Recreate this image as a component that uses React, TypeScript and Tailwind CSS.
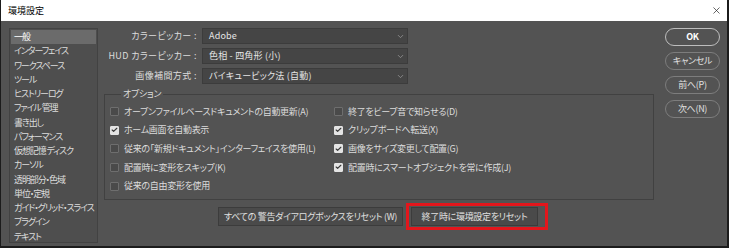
import { Check, ChevronDown, X } from "lucide-react";

const jp = {
  fontFamily: '"Noto Sans CJK JP", "Noto Sans", sans-serif',
  fontFeatureSettings: '"palt"',
};

const sideItems = [
  "一般",
  "インターフェイス",
  "ワークスペース",
  "ツール",
  "ヒストリーログ",
  "ファイル 管理",
  "書き出し",
  "パフォーマンス",
  "仮想記憶 ディスク",
  "カーソル",
  "透明部分・色域",
  "単位・定規",
  "ガイド・グリッド・スライス",
  "プラグイン",
  "テキスト",
];

const selects = [
  { label: "カラーピッカー", value: "Adobe" },
  { label: "HUD カラーピッカー", value: "色相 - 四角形 (小)" },
  { label: "画像補間方式", value: "バイキュービック法 (自動)" },
];

const leftOptions = [
  { text: "オープンファイルベースドキュメントの自動更新(A)", on: false },
  { text: "ホーム画面を自動表示", on: true },
  { text: "従来の「新規ドキュメント」インターフェイスを使用(L)", on: false },
  { text: "配置時に変形をスキップ(K)", on: false },
  { text: "従来の自由変形を使用", on: false },
];

const rightOptions = [
  { text: "終了をビープ音で知らせる(D)", on: false },
  { text: "クリップボードへ転送(X)", on: true },
  { text: "画像をサイズ変更して配置(G)", on: true },
  { text: "配置時にスマートオブジェクトを常に作成(J)", on: true },
];

const CheckRow = ({ text, on }: { text: string; on: boolean }) => (
  <div className="flex h-[18.7px] items-center gap-[5px]">
    <span
      className={`flex h-[9px] w-[9px] shrink-0 items-center justify-center rounded-[1px] border ${
        on ? "border-[#e4e4e4] bg-[#e4e4e4]" : "border-[#6e6e6e] bg-[#4a4a4a]"
      }`}
    >
      {on && <Check size={8} strokeWidth={4} color="#3a3a3a" />}
    </span>
    <span className="whitespace-nowrap">{text}</span>
  </div>
);

const PillButton = ({ label, strong }: { label: string; strong?: boolean }) => (
  <button
    className={`flex h-[18px] w-[55px] items-center justify-center rounded-full border text-[9px] ${
      strong
        ? "border-[#bdbdbd] font-semibold text-white"
        : "border-[#7d7d7d] text-[#e0e0e0]"
    }`}
  >
    {label}
  </button>
);

export default function App() {
  return (
    <div
      className="flex h-[248px] w-[729px] flex-col overflow-hidden border-l border-r-2 border-b-2 border-[#1c1c1c] bg-[#535353] text-[9px] tracking-[-0.3px] text-[#dcdcdc]"
      style={jp}
    >
      <div className="flex h-[21px] shrink-0 items-center justify-between bg-white pl-[7px] pr-[5px] text-[9px] tracking-normal text-black">
        <span>環境設定</span>
        <X size={11} strokeWidth={1.5} color="#222" />
      </div>

      <div className="flex flex-1 pt-[7px]">
        {/* sidebar */}
        <div className="ml-[8px] h-[215px] w-[89px] shrink-0 border border-[#424242] bg-[#4e4e4e] p-[1px] text-[9px] tracking-[-1.1px]">
          {sideItems.map((item, i) => (
            <div
              key={item}
              className={`h-[14.28px] whitespace-nowrap pl-[3px] leading-[13px] ${
                i === 0 ? "bg-[#6b6b6b] text-white" : ""
              }`}
            >
              {item}
            </div>
          ))}
        </div>

        {/* main */}
        <div className="ml-[6px] flex w-[550px] shrink-0 flex-col">
          <div className="flex flex-col gap-[4px]">
            {selects.map((s) => (
              <div key={s.label} className="flex items-center">
                <span className="w-[95px] whitespace-nowrap pr-[2px] text-right tracking-[0.4px]">
                  {s.label} :
                </span>
                <div className="ml-[3px] flex h-[16px] w-[206px] items-center justify-between border border-[#3c3c3c] bg-[#454545] pl-[6px] pr-[2px] tracking-[0.2px] text-[#e6e6e6]">
                  <span>{s.value}</span>
                  <ChevronDown size={9} strokeWidth={2} color="#9a9a9a" />
                </div>
              </div>
            ))}
          </div>

          <fieldset className="mt-[5px] h-[111px] border border-[#414141] pl-[5px] pt-[3px]">
            <legend className="ml-[11px] px-[2px] leading-[10px]">オプション</legend>
            <div className="grid grid-cols-[224px_1fr]">
              <div className="flex flex-col">
                {leftOptions.map((o) => (
                  <CheckRow key={o.text} {...o} />
                ))}
              </div>
              <div className="flex flex-col">
                {rightOptions.map((o) => (
                  <CheckRow key={o.text} {...o} />
                ))}
              </div>
            </div>
          </fieldset>

          <div className="mt-[7px] flex justify-center gap-[8px] pr-[2px]">
            <button className="h-[19px] w-[185px] whitespace-nowrap border border-[#3c3c3c] bg-[#4a4a4a] text-[#e0e0e0]">
              すべての 警告ダイアログボックスをリセット (W)
            </button>
            <div className="relative">
              <button className="h-[19px] w-[127px] whitespace-nowrap border border-[#3c3c3c] bg-[#4a4a4a] text-[#e0e0e0]">
                終了時に環境設定をリセット
              </button>
              <span className="pointer-events-none absolute -left-[5px] -top-[4px] -bottom-[4px] -right-[10px] border-[3px] border-[#e3161c]" />
            </div>
          </div>
        </div>

        {/* buttons */}
        <div className="ml-[11px] flex flex-col gap-[6px]">
          <PillButton label="OK" strong />
          <PillButton label="キャンセル" />
          <PillButton label="前へ(P)" />
          <PillButton label="次へ(N)" />
        </div>
      </div>
    </div>
  );
}
